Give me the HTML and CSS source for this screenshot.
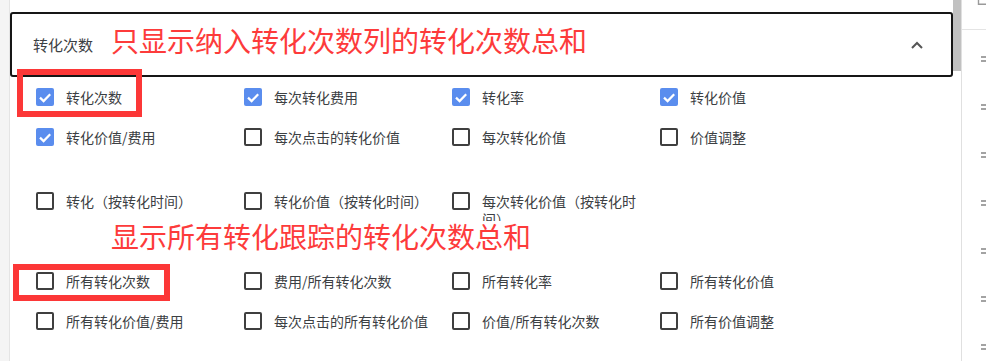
FILE: index.html
```html
<!DOCTYPE html>
<html lang="zh-CN">
<head>
<meta charset="utf-8">
<title>转化次数</title>
<link rel="stylesheet" href="styles.css">
</head>
<body>
<div class="rail"></div>
<main class="main">
  <div class="section-header">
    <span class="section-title">转化次数</span>
    <svg class="chevron" width="12" height="8" viewBox="0 0 12 8"><path d="M1 7 L6 2 L11 7" fill="none" stroke="#555" stroke-width="2"/></svg>
  </div>

  <div class="group">
    <label class="item"><span class="box checked"><svg viewBox="0 0 18 18"><path d="M4 9.6 L7.6 13.1 L14.2 6.2" fill="none" stroke="#fff" stroke-width="2.2"/></svg></span><span class="text">转化次数</span></label>
    <label class="item"><span class="box checked"><svg viewBox="0 0 18 18"><path d="M4 9.6 L7.6 13.1 L14.2 6.2" fill="none" stroke="#fff" stroke-width="2.2"/></svg></span><span class="text">每次转化费用</span></label>
    <label class="item"><span class="box checked"><svg viewBox="0 0 18 18"><path d="M4 9.6 L7.6 13.1 L14.2 6.2" fill="none" stroke="#fff" stroke-width="2.2"/></svg></span><span class="text">转化率</span></label>
    <label class="item"><span class="box checked"><svg viewBox="0 0 18 18"><path d="M4 9.6 L7.6 13.1 L14.2 6.2" fill="none" stroke="#fff" stroke-width="2.2"/></svg></span><span class="text">转化价值</span></label>
    <label class="item"><span class="box checked"><svg viewBox="0 0 18 18"><path d="M4 9.6 L7.6 13.1 L14.2 6.2" fill="none" stroke="#fff" stroke-width="2.2"/></svg></span><span class="text">转化价值/费用</span></label>
    <label class="item"><span class="box"></span><span class="text">每次点击的转化价值</span></label>
    <label class="item"><span class="box"></span><span class="text">每次转化价值</span></label>
    <label class="item"><span class="box"></span><span class="text">价值调整</span></label>
  </div>

  <div class="group group-time">
    <label class="item"><span class="box"></span><span class="text">转化（按转化时间）</span></label>
    <label class="item"><span class="box"></span><span class="text">转化价值（按转化时间）</span></label>
    <label class="item"><span class="box"></span><span class="text">每次转化价值（按转化时间）</span></label>
  </div>

  <div class="group group-all">
    <label class="item"><span class="box"></span><span class="text">所有转化次数</span></label>
    <label class="item"><span class="box"></span><span class="text">费用/所有转化次数</span></label>
    <label class="item"><span class="box"></span><span class="text">所有转化率</span></label>
    <label class="item"><span class="box"></span><span class="text">所有转化价值</span></label>
    <label class="item"><span class="box"></span><span class="text">所有转化价值/费用</span></label>
    <label class="item"><span class="box"></span><span class="text">每次点击的所有转化价值</span></label>
    <label class="item"><span class="box"></span><span class="text">价值/所有转化次数</span></label>
    <label class="item"><span class="box"></span><span class="text">所有价值调整</span></label>
  </div>

  <div class="note note-one">只显示纳入转化次数列的转化次数总和</div>
  <div class="note note-two">显示所有转化跟踪的转化次数总和</div>
  <div class="mark mark-one"></div>
  <div class="mark mark-two"></div>
</main>
<div class="scrollbar"><div class="thumb"></div></div>
<aside class="side">
  <div class="side-top">
    <svg class="side-icon" width="10" height="6" viewBox="0 0 10 6"><path d="M1.5 0 V4.2 H9.5" fill="none" stroke="#9a9a9a" stroke-width="1.4"/></svg>
  </div>
  <div class="handles">
    <div class="handle"></div>
    <div class="handle"></div>
    <div class="handle"></div>
    <div class="handle"></div>
    <div class="handle"></div>
    <div class="handle"></div>
    <div class="handle"></div>
  </div>
</aside>
</body>
</html>
```

FILE: styles.css
```css
html, body {
  margin: 0;
  padding: 0;
}

body {
  width: 986px;
  height: 361px;
  overflow: hidden;
  display: flex;
  background: #fff;
  font-family: "Noto Sans CJK SC", "Noto Sans", sans-serif;
  color: #3c4043;
}

.rail {
  width: 9px;
  flex: none;
  background: #f4f4f4;
  border-right: 1px solid #e4e4e4;
}

.main {
  position: relative;
  width: 943px;
  flex: none;
  padding-top: 12px;
  box-sizing: border-box;
}

.section-header {
  height: 65px;
  box-sizing: border-box;
  border: 2px solid #161616;
  border-radius: 3px;
  display: flex;
  align-items: center;
  justify-content: space-between;
  padding: 0 28px 0 21px;
}

.section-title {
  font-size: 15px;
  line-height: 18px;
  color: #3c4043;
}

.chevron {
  display: block;
}

.group {
  display: grid;
  grid-template-columns: repeat(4, 208px);
  padding-left: 26px;
}

.group-time {
  margin-top: 24px;
}

.group-all {
  margin-top: 22px;
}

.item {
  display: flex;
  align-items: flex-start;
  gap: 12px;
  min-height: 40px;
  box-sizing: border-box;
  padding: 11px 24px 11px 0;
}

.box {
  width: 18px;
  height: 18px;
  flex: none;
  box-sizing: border-box;
  border: 2px solid #3f3f3f;
  border-radius: 2px;
}

.box.checked {
  border: none;
  background: #5a8dee;
}

.box svg {
  display: block;
  width: 18px;
  height: 18px;
}

.text {
  font-size: 14px;
  line-height: 18px;
  color: #3c4043;
}

.note {
  position: absolute;
  left: 101px;
  font-size: 28px;
  line-height: 30px;
  color: #fd3b3b;
  background: #fff;
  white-space: nowrap;
}

.note-one {
  top: 25px;
  background: transparent;
}

.note-two {
  top: 221px;
}

.mark {
  position: absolute;
  border: 6px solid #fc3737;
  box-sizing: border-box;
}

.mark-one {
  left: 7px;
  top: 69px;
  width: 125px;
  height: 48px;
}

.mark-two {
  left: 3px;
  top: 264px;
  width: 157px;
  height: 37px;
}

.scrollbar {
  width: 8px;
  flex: none;
  background: #fff;
}

.thumb {
  height: 71px;
  background: #c1c1c1;
}

.side {
  width: 24px;
  flex: none;
  border-left: 1px solid #e0e0e0;
}

.side-top {
  height: 29px;
  border-bottom: 1px solid #e4e4e4;
  position: relative;
}

.side-icon {
  display: block;
  margin-left: 15px;
}

.handles {
  padding-top: 5px;
  display: flex;
  flex-direction: column;
}

.handle {
  height: 48px;
  display: flex;
  flex-direction: column;
  justify-content: center;
  gap: 2.5px;
  padding-left: 19px;
}

.handle::before,
.handle::after {
  content: "";
  display: block;
  width: 8px;
  height: 1.5px;
  background: #a3a3a3;
}
```
